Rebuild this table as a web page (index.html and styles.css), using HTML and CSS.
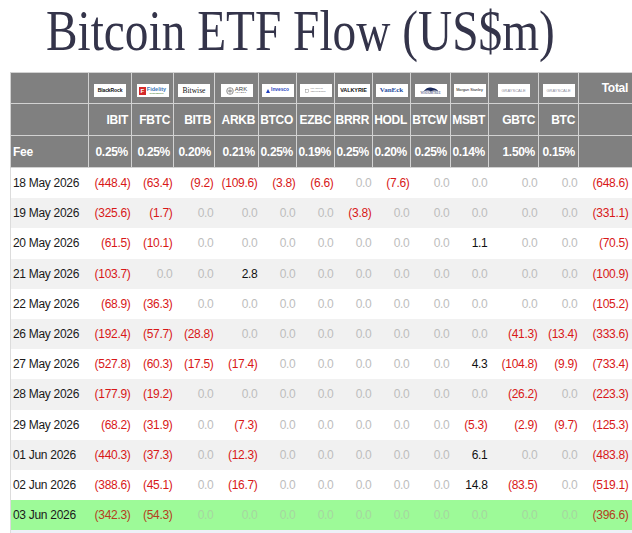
FILE: index.html
```html
<!DOCTYPE html>
<html lang="en">
<head>
<meta charset="utf-8">
<title>Bitcoin ETF Flow</title>
<link rel="stylesheet" href="styles.css">
</head>
<body>
<div class="page">
  <h1 class="title">Bitcoin ETF Flow (US$m)</h1>
  <table class="flows">
    <colgroup>
      <col class="w-date"><col class="w43"><col class="w42"><col class="w41"><col class="w44">
      <col class="w38"><col class="w38"><col class="w38"><col class="w38"><col class="w40">
      <col class="w38"><col class="w50"><col class="w40"><col class="w54">
    </colgroup>
    <thead>
      <tr class="logos">
        <th></th>
        <th><span class="logo lg-blackrock">BlackRock</span></th>
        <th><span class="logo lg-fidelity"><span class="fid-box">F</span><span class="fid-txt">Fidelity<small>INVESTMENTS</small></span></span></th>
        <th><span class="logo lg-bitwise">Bitwise</span></th>
        <th><span class="logo lg-ark"><svg class="ark-icon" viewBox="0 0 10 10" width="8" height="8"><circle cx="5" cy="5" r="4.2" fill="none" stroke="#555" stroke-width="0.7"/><path d="M5 1v8M1.5 3.5l7 3M1.5 6.5l7-3" stroke="#555" stroke-width="0.6"/></svg><span class="ark-txt">ARK<small>INVEST</small></span></span></th>
        <th><span class="logo lg-invesco"><svg viewBox="0 0 6 6" width="4" height="4"><path d="M3 0L6 6H0z" fill="#1f3fbf"/></svg>Invesco</span></th>
        <th><span class="logo lg-franklin"><svg viewBox="0 0 6 6" width="4" height="4"><rect x="0.5" y="1" width="5" height="4" fill="none" stroke="#777" stroke-width="0.6"/></svg><span>FRANKLIN<br>TEMPLETON</span></span></th>
        <th><span class="logo lg-valkyrie">VALKYRIE</span></th>
        <th><span class="logo lg-vaneck">VanEck</span></th>
        <th><span class="logo lg-wisdom"><svg viewBox="0 0 20 6" width="16" height="5"><path d="M1 5C4 1 7 0 10 0.5S17 2 19 5C15 3.5 12 4 10 5.5 8 4 5 3.5 1 5z" fill="#1c2a5c"/></svg><span>WISDOMTREE</span></span></th>
        <th><span class="logo lg-morgan">Morgan Stanley</span></th>
        <th><span class="logo lg-gray">GRAYSCALE</span></th>
        <th><span class="logo lg-gray">GRAYSCALE</span></th>
        <th class="total">Total</th>
      </tr>
      <tr class="tickers">
        <th></th><th>IBIT</th><th>FBTC</th><th>BITB</th><th>ARKB</th><th>BTCO</th><th>EZBC</th><th>BRRR</th><th>HODL</th><th>BTCW</th><th>MSBT</th><th>GBTC</th><th>BTC</th><th></th>
      </tr>
      <tr class="fees">
        <th class="label">Fee</th><th>0.25%</th><th>0.25%</th><th>0.20%</th><th>0.21%</th><th>0.25%</th><th>0.19%</th><th>0.25%</th><th>0.20%</th><th>0.25%</th><th>0.14%</th><th>1.50%</th><th>0.15%</th><th></th>
      </tr>
    </thead>
    <tbody>
      <tr><td class="date">18 May 2026</td><td class="neg">(448.4)</td><td class="neg">(63.4)</td><td class="neg">(9.2)</td><td class="neg">(109.6)</td><td class="neg">(3.8)</td><td class="neg">(6.6)</td><td class="zero">0.0</td><td class="neg">(7.6)</td><td class="zero">0.0</td><td class="zero">0.0</td><td class="zero">0.0</td><td class="zero">0.0</td><td class="neg tot">(648.6)</td></tr>
      <tr><td class="date">19 May 2026</td><td class="neg">(325.6)</td><td class="neg">(1.7)</td><td class="zero">0.0</td><td class="zero">0.0</td><td class="zero">0.0</td><td class="zero">0.0</td><td class="neg">(3.8)</td><td class="zero">0.0</td><td class="zero">0.0</td><td class="zero">0.0</td><td class="zero">0.0</td><td class="zero">0.0</td><td class="neg tot">(331.1)</td></tr>
      <tr><td class="date">20 May 2026</td><td class="neg">(61.5)</td><td class="neg">(10.1)</td><td class="zero">0.0</td><td class="zero">0.0</td><td class="zero">0.0</td><td class="zero">0.0</td><td class="zero">0.0</td><td class="zero">0.0</td><td class="zero">0.0</td><td class="pos">1.1</td><td class="zero">0.0</td><td class="zero">0.0</td><td class="neg tot">(70.5)</td></tr>
      <tr><td class="date">21 May 2026</td><td class="neg">(103.7)</td><td class="zero">0.0</td><td class="zero">0.0</td><td class="pos">2.8</td><td class="zero">0.0</td><td class="zero">0.0</td><td class="zero">0.0</td><td class="zero">0.0</td><td class="zero">0.0</td><td class="zero">0.0</td><td class="zero">0.0</td><td class="zero">0.0</td><td class="neg tot">(100.9)</td></tr>
      <tr><td class="date">22 May 2026</td><td class="neg">(68.9)</td><td class="neg">(36.3)</td><td class="zero">0.0</td><td class="zero">0.0</td><td class="zero">0.0</td><td class="zero">0.0</td><td class="zero">0.0</td><td class="zero">0.0</td><td class="zero">0.0</td><td class="zero">0.0</td><td class="zero">0.0</td><td class="zero">0.0</td><td class="neg tot">(105.2)</td></tr>
      <tr><td class="date">26 May 2026</td><td class="neg">(192.4)</td><td class="neg">(57.7)</td><td class="neg">(28.8)</td><td class="zero">0.0</td><td class="zero">0.0</td><td class="zero">0.0</td><td class="zero">0.0</td><td class="zero">0.0</td><td class="zero">0.0</td><td class="zero">0.0</td><td class="neg">(41.3)</td><td class="neg">(13.4)</td><td class="neg tot">(333.6)</td></tr>
      <tr><td class="date">27 May 2026</td><td class="neg">(527.8)</td><td class="neg">(60.3)</td><td class="neg">(17.5)</td><td class="neg">(17.4)</td><td class="zero">0.0</td><td class="zero">0.0</td><td class="zero">0.0</td><td class="zero">0.0</td><td class="zero">0.0</td><td class="pos">4.3</td><td class="neg">(104.8)</td><td class="neg">(9.9)</td><td class="neg tot">(733.4)</td></tr>
      <tr><td class="date">28 May 2026</td><td class="neg">(177.9)</td><td class="neg">(19.2)</td><td class="zero">0.0</td><td class="zero">0.0</td><td class="zero">0.0</td><td class="zero">0.0</td><td class="zero">0.0</td><td class="zero">0.0</td><td class="zero">0.0</td><td class="zero">0.0</td><td class="neg">(26.2)</td><td class="zero">0.0</td><td class="neg tot">(223.3)</td></tr>
      <tr><td class="date">29 May 2026</td><td class="neg">(68.2)</td><td class="neg">(31.9)</td><td class="zero">0.0</td><td class="neg">(7.3)</td><td class="zero">0.0</td><td class="zero">0.0</td><td class="zero">0.0</td><td class="zero">0.0</td><td class="zero">0.0</td><td class="neg">(5.3)</td><td class="neg">(2.9)</td><td class="neg">(9.7)</td><td class="neg tot">(125.3)</td></tr>
      <tr><td class="date">01 Jun 2026</td><td class="neg">(440.3)</td><td class="neg">(37.3)</td><td class="zero">0.0</td><td class="neg">(12.3)</td><td class="zero">0.0</td><td class="zero">0.0</td><td class="zero">0.0</td><td class="zero">0.0</td><td class="zero">0.0</td><td class="pos">6.1</td><td class="zero">0.0</td><td class="zero">0.0</td><td class="neg tot">(483.8)</td></tr>
      <tr><td class="date">02 Jun 2026</td><td class="neg">(388.6)</td><td class="neg">(45.1)</td><td class="zero">0.0</td><td class="neg">(16.7)</td><td class="zero">0.0</td><td class="zero">0.0</td><td class="zero">0.0</td><td class="zero">0.0</td><td class="zero">0.0</td><td class="pos">14.8</td><td class="neg">(83.5)</td><td class="zero">0.0</td><td class="neg tot">(519.1)</td></tr>
      <tr class="today"><td class="date">03 Jun 2026</td><td class="neg">(342.3)</td><td class="neg">(54.3)</td><td class="zero">0.0</td><td class="zero">0.0</td><td class="zero">0.0</td><td class="zero">0.0</td><td class="zero">0.0</td><td class="zero">0.0</td><td class="zero">0.0</td><td class="zero">0.0</td><td class="zero">0.0</td><td class="zero">0.0</td><td class="neg tot">(396.6)</td></tr>
      <tr class="summary"><td class="date"></td><td></td><td></td><td></td><td></td><td></td><td></td><td></td><td></td><td></td><td></td><td></td><td></td><td class="tot"></td></tr>
    </tbody>
  </table>
</div>
</body>
</html>
```

FILE: styles.css
```css
html, body {
  margin: 0;
  padding: 0;
  background: #ffffff;
}

body {
  font-family: "Liberation Sans", Arial, sans-serif;
  color: #1a1a1a;
}

.page {
  padding-left: 10px;
}

.title {
  margin: 3px 0 13px 36px;
  font-family: "Liberation Serif", "Times New Roman", serif;
  font-weight: normal;
  font-size: 56px;
  line-height: 56px;
  color: #34344a;
  white-space: nowrap;
  transform: scaleX(0.845);
  transform-origin: left center;
}

.flows {
  width: 622px;
  table-layout: fixed;
  border-collapse: collapse;
  font-size: 12px;
  letter-spacing: -0.3px;
}

.w-date { width: 78px; }
.w38 { width: 38px; }
.w40 { width: 40px; }
.w41 { width: 41px; }
.w42 { width: 42px; }
.w43 { width: 43px; }
.w44 { width: 44px; }
.w50 { width: 50px; }
.w54 { width: 54px; }

.flows thead th {
  background: #808080;
  color: #ffffff;
  border: 1px solid #d2d2d2;
  font-weight: bold;
  text-align: right;
  padding: 0 3px 0 0;
  white-space: nowrap;
  overflow: hidden;
}

.logos th {
  height: 30px;
}

.logos th:not(.total) {
  text-align: center;
  padding: 0;
}

.logos th.total {
  padding-right: 4px;
}

.tickers th,
.fees th {
  height: 31px;
}

.fees th.label {
  text-align: left;
  padding-left: 2px;
}

/* logos */
.logo {
  display: inline-flex;
  align-items: center;
  justify-content: center;
  gap: 1px;
  width: 32px;
  height: 13px;
  margin-top: 5px;
  background: #ffffff;
  vertical-align: middle;
  overflow: hidden;
  letter-spacing: 0;
  font-weight: normal;
  line-height: 1;
  color: #222;
}

.lg-blackrock {
  font-size: 5px;
  font-weight: bold;
  color: #111;
  letter-spacing: -0.1px;
}

.fid-box {
  display: inline-flex;
  align-items: center;
  justify-content: center;
  width: 7px;
  height: 8px;
  background: #d42a2a;
  color: #fff;
  font-size: 6px;
  font-weight: bold;
}

.fid-txt {
  display: flex;
  flex-direction: column;
  font-size: 5.5px;
  font-weight: bold;
  color: #3d78b8;
}

.fid-txt small {
  font-size: 2px;
  color: #5a8f4a;
}

.lg-bitwise {
  font-family: "Liberation Serif", "Times New Roman", serif;
  font-size: 7.5px;
  color: #111;
}

.ark-txt {
  display: flex;
  flex-direction: column;
  align-items: center;
  font-size: 6px;
  color: #444;
}

.ark-txt small {
  font-size: 2.5px;
  letter-spacing: 0.3px;
}

.lg-invesco {
  font-size: 4.8px;
  font-weight: bold;
  color: #1f3fbf;
}

.lg-franklin {
  font-size: 2.5px;
  color: #777;
  text-align: left;
}

.lg-valkyrie {
  font-size: 5.5px;
  font-weight: bold;
  color: #111;
  letter-spacing: -0.1px;
}

.lg-vaneck {
  font-family: "Liberation Serif", "Times New Roman", serif;
  font-size: 7px;
  font-weight: bold;
  color: #1f4ea0;
}

.lg-wisdom {
  flex-direction: column;
  gap: 0;
  font-family: "Liberation Serif", "Times New Roman", serif;
  font-size: 3px;
  color: #1c2a5c;
}

.lg-morgan {
  font-size: 3.8px;
  color: #111;
}

.lg-gray {
  font-size: 4px;
  color: #8a8a9a;
}

/* body rows */
.flows tbody td {
  height: 30.2px;
  padding: 0 1px 0 0;
  text-align: right;
  white-space: nowrap;
}

.flows tbody tr:nth-child(even) {
  background: #f1f1f1;
}

.flows tbody td.date {
  text-align: left;
  padding-left: 2px;
  color: #1a1a1a;
  border-left: 1px solid #dcdcdc;
}

.flows tbody td.tot {
  padding-right: 4px;
}

.neg { color: #d81818; }
.zero { color: #bdbdbd; }
.pos { color: #111111; }

.flows tbody tr.today {
  background: #9dfa98;
}

.today .neg { color: #b4401c; }
.today .zero { color: #a6d6a0; }

.flows tbody tr.summary {
  background: #eef0f7;
}
```
